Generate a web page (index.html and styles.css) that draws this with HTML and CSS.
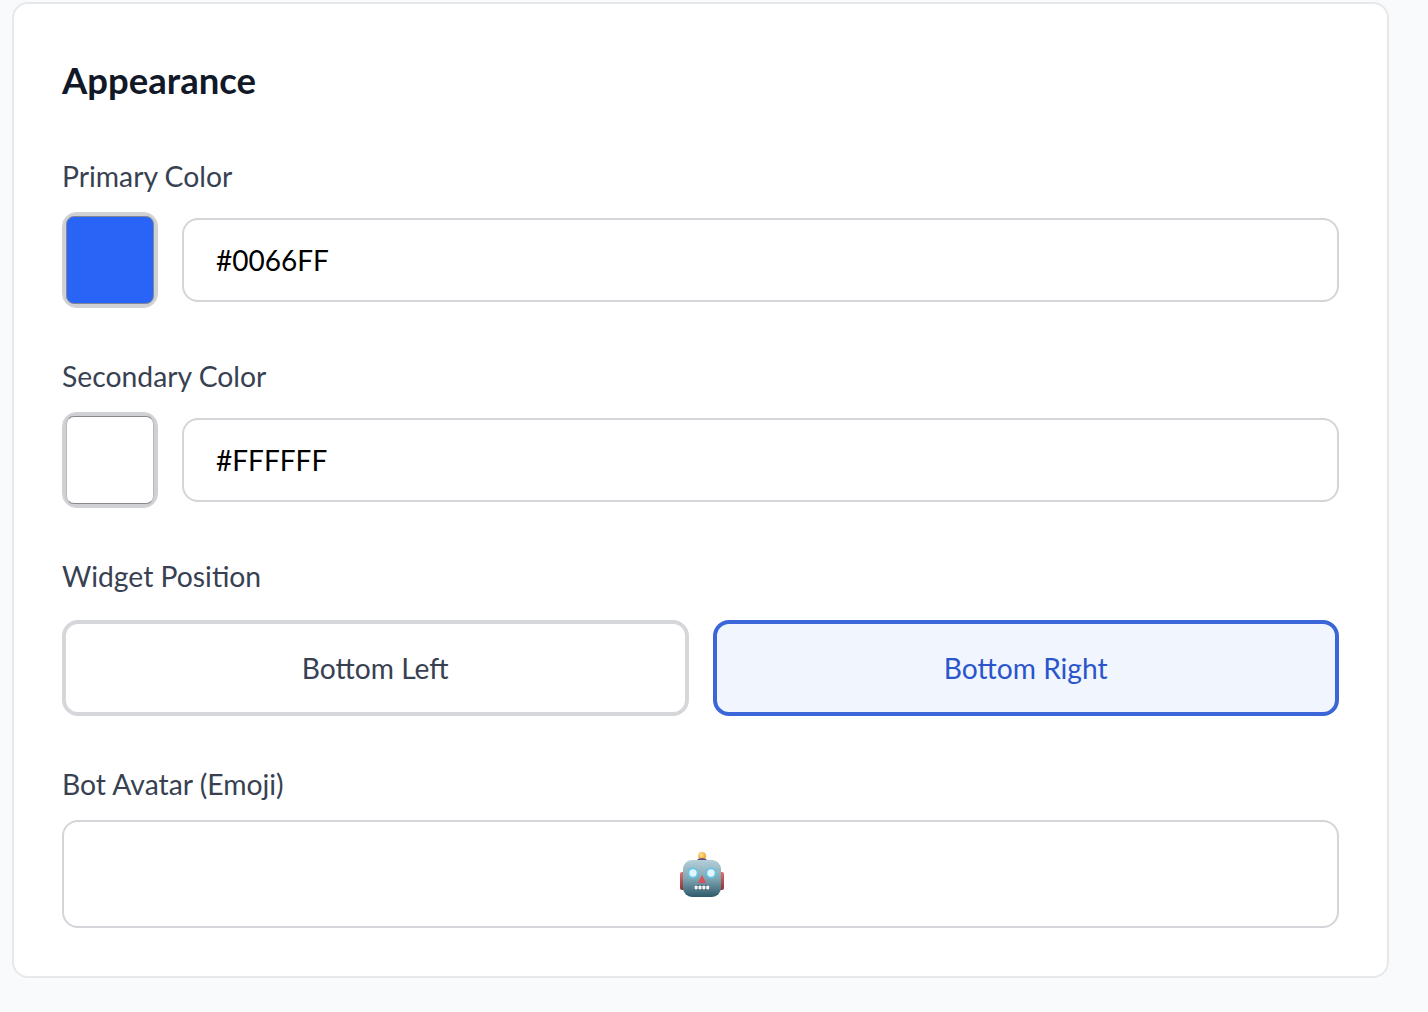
FILE: index.html
```html
<!DOCTYPE html>
<html lang="en">
<head>
<meta charset="utf-8">
<title>Appearance</title>
<link rel="stylesheet" href="styles.css">
</head>
<body>
<section class="card">
  <h2 class="title">Appearance</h2>
  <div class="field">
    <label class="label">Primary Color</label>
    <div class="color-row">
      <div class="swatch"><span class="swatch-fill swatch-blue"></span></div>
      <input class="text-input" type="text" value="#0066FF">
    </div>
  </div>
  <div class="field">
    <label class="label">Secondary Color</label>
    <div class="color-row">
      <div class="swatch"><span class="swatch-fill swatch-white"></span></div>
      <input class="text-input" type="text" value="#FFFFFF">
    </div>
  </div>
  <div class="field">
    <label class="label label-options">Widget Position</label>
    <div class="options">
      <button class="option" type="button">Bottom Left</button>
      <button class="option option-active" type="button">Bottom Right</button>
    </div>
  </div>
  <div class="field">
    <label class="label">Bot Avatar (Emoji)</label>
    <div class="emoji-box">
      <svg class="robot" viewBox="0 0 44 45" width="44" height="45" aria-label="robot">
        <defs>
          <linearGradient id="head" x1="0" y1="0" x2="0" y2="1">
            <stop offset="0" stop-color="#b4cfd8"/>
            <stop offset="0.5" stop-color="#7fa6b3"/>
            <stop offset="1" stop-color="#2d5a6b"/>
          </linearGradient>
          <linearGradient id="ear" x1="0" y1="0" x2="0" y2="1">
            <stop offset="0" stop-color="#d9736f"/>
            <stop offset="1" stop-color="#8c3438"/>
          </linearGradient>
          <radialGradient id="bulb" cx="0.4" cy="0.35" r="0.7">
            <stop offset="0" stop-color="#ffe396"/>
            <stop offset="1" stop-color="#ec9c20"/>
          </radialGradient>
        </defs>
        <rect x="0" y="20" width="5" height="18" rx="2" fill="url(#ear)"/>
        <rect x="39" y="20" width="5" height="18" rx="2" fill="url(#ear)"/>
        <circle cx="22" cy="4" r="4" fill="url(#bulb)"/>
        <path d="M17 8 C18 5.500 26 5.500 27 8 L25.500 10 H18.500 Z" fill="#5b4b88"/>
        <rect x="3" y="8" width="38" height="37" rx="9" fill="url(#head)"/>
        <circle cx="13" cy="21" r="4.600" fill="#e2f5fb" stroke="#63c5e6" stroke-width="1.800"/>
        <circle cx="31" cy="21" r="4.600" fill="#e2f5fb" stroke="#63c5e6" stroke-width="1.800"/>
        <path d="M22 23 L26 31 H18 Z" fill="#d8525c"/>
        <rect x="14" y="33" width="16" height="5" rx="1.500" fill="#2a4a57"/>
        <rect x="14.500" y="33.500" width="3.200" height="4" rx="0.800" fill="#f4f6f7"/>
        <rect x="18.400" y="33.500" width="3.200" height="4" rx="0.800" fill="#f4f6f7"/>
        <rect x="22.300" y="33.500" width="3.200" height="4" rx="0.800" fill="#f4f6f7"/>
        <rect x="26.200" y="33.500" width="3.200" height="4" rx="0.800" fill="#f4f6f7"/>
      </svg>
    </div>
  </div>
</section>
</body>
</html>
```
FILE: styles.css
```css
* {
  box-sizing: border-box;
}

html,
body {
  margin: 0;
  height: 100%;
}

body {
  background: #f9fafc;
  font-family: Lato, "Liberation Sans", sans-serif;
  padding: 2px 39px 0 12px;
  overflow: hidden;
}

.card {
  height: 976px;
  background: #fff;
  border: 2px solid #e7e8ea;
  border-radius: 16px;
  padding: 48px;
}

.title {
  margin: 0;
  font-size: 36.5px;
  line-height: 56px;
  font-weight: 700;
  color: #111827;
}

.field {
  margin-top: 52px;
}

.label {
  display: block;
  font-size: 28.3px;
  line-height: 32px;
  font-weight: 400;
  color: #374151;
  margin-bottom: 20px;
}

.label-options {
  margin-bottom: 28px;
}

.color-row {
  display: flex;
  align-items: center;
  gap: 24px;
}

.swatch {
  flex: none;
  width: 96px;
  height: 96px;
  padding: 3px;
  background: #fff;
  border: 1px solid #d0d1d4;
  border-radius: 14px;
  box-shadow: inset 0 0 0 3px #cfd0d3;
}

.swatch-fill {
  display: block;
  width: 100%;
  height: 100%;
  border-radius: 8px;
}

.swatch-blue {
  background: #2a64f6;
  border: 1px solid #7f8794;
}

.swatch-white {
  background: #fff;
  border: 1px solid #b9babd;
  border-top-color: #88898c;
  border-bottom-color: #88898c;
}

.text-input {
  flex: 1;
  min-width: 0;
  height: 84px;
  padding: 0 32px;
  font-family: inherit;
  font-size: 28px;
  color: #000;
  background: #fff;
  border: 2px solid #d4d5d8;
  border-radius: 16px;
  outline: none;
}

.options {
  display: grid;
  grid-template-columns: 1fr 1fr;
  gap: 24px;
}

.option {
  height: 96px;
  font-family: inherit;
  font-size: 28.2px;
  color: #374151;
  background: #fff;
  border: 4px solid #d6d7da;
  border-radius: 16px;
}

.option-active {
  color: #2b55cc;
  background: #f1f5fe;
  border-color: #3a66d8;
}

.emoji-box {
  display: flex;
  align-items: center;
  justify-content: center;
  height: 108px;
  padding-left: 2px;
  background: #fff;
  border: 2px solid #d4d5d8;
  border-radius: 16px;
}
```
